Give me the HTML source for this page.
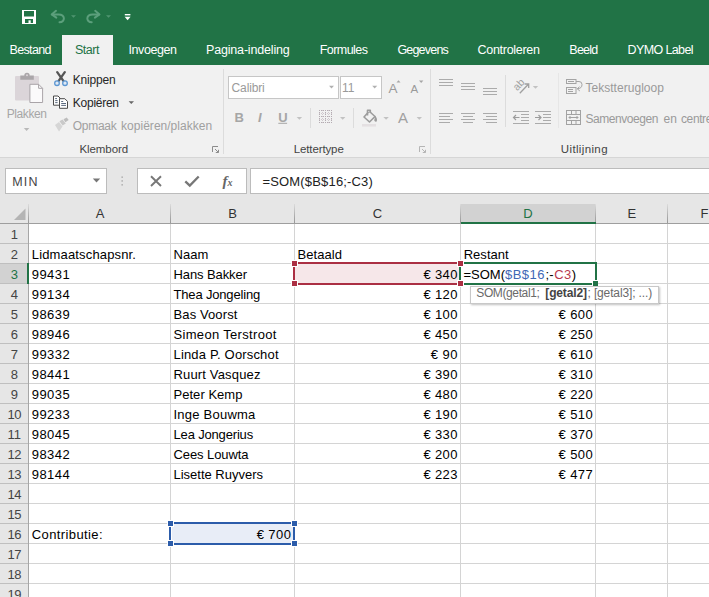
<!DOCTYPE html>
<html><head><meta charset="utf-8"><title>Excel</title>
<style>
html,body{margin:0;padding:0;}
body{width:709px;height:597px;overflow:hidden;position:relative;background:#fff;font-family:"Liberation Sans",sans-serif;}
.a{position:absolute;}
.t{position:absolute;white-space:pre;line-height:1;font-family:"Liberation Sans",sans-serif;}
svg{position:absolute;overflow:visible;}
</style></head><body>
<!-- title + tabs -->
<div class="a" style="left:0;top:0;width:709px;height:65px;background:#217346"></div>
<div class="a" style="left:62px;top:35px;width:51px;height:30px;background:#f1f1f1"></div>
<!-- ribbon -->
<div class="a" style="left:0;top:65px;width:709px;height:92px;background:#f1f1f1"></div>
<div class="a" style="left:0;top:157px;width:709px;height:1px;background:#d6d6d6"></div>
<!-- formula bar area + headers -->
<div class="a" style="left:0;top:158px;width:709px;height:65px;background:#e6e6e6"></div>
<!-- ribbon group separators -->
<div class="a" style="left:223px;top:69px;width:1px;height:85px;background:#dcdcdc"></div>
<div class="a" style="left:430px;top:69px;width:1px;height:85px;background:#dcdcdc"></div>
<div class="a" style="left:310px;top:108px;width:1px;height:20px;background:#dcdcdc"></div>
<div class="a" style="left:353px;top:108px;width:1px;height:20px;background:#dcdcdc"></div>
<div class="a" style="left:505px;top:75px;width:1px;height:52px;background:#dcdcdc"></div>
<div class="a" style="left:558px;top:73px;width:1px;height:55px;background:#e6e6e6"></div>
<!-- font boxes -->
<div class="a" style="left:228px;top:76px;width:111px;height:23px;background:#fff;border:1px solid #c6c6c6;box-sizing:border-box"></div>
<div class="a" style="left:340px;top:76px;width:42px;height:23px;background:#fff;border:1px solid #c6c6c6;box-sizing:border-box"></div>
<!-- name box / fx / formula -->
<div class="a" style="left:5px;top:168px;width:102px;height:26px;background:#fff;border:1px solid #bcbcbc;box-sizing:border-box"></div>
<div class="a" style="left:137px;top:168px;width:110px;height:26px;background:#fff;border:1px solid #bcbcbc;box-sizing:border-box"></div>
<div class="a" style="left:250px;top:168px;width:470px;height:26px;background:#fff;border:1px solid #bcbcbc;box-sizing:border-box"></div>
<div class="a" style="left:0px;top:224px;width:28px;height:373px;background:#e6e6e6;"></div>
<div class="a" style="left:0px;top:264px;width:27px;height:19px;background:#d2d2d2;"></div>
<div class="a" style="left:461px;top:204px;width:134px;height:18px;background:#d2d2d2;"></div>
<div class="a" style="left:0px;top:243px;width:28px;height:1px;background:#bfbfbf;"></div>
<div class="a" style="left:0px;top:263px;width:28px;height:1px;background:#bfbfbf;"></div>
<div class="a" style="left:0px;top:283px;width:28px;height:1px;background:#bfbfbf;"></div>
<div class="a" style="left:0px;top:303px;width:28px;height:1px;background:#bfbfbf;"></div>
<div class="a" style="left:0px;top:323px;width:28px;height:1px;background:#bfbfbf;"></div>
<div class="a" style="left:0px;top:343px;width:28px;height:1px;background:#bfbfbf;"></div>
<div class="a" style="left:0px;top:363px;width:28px;height:1px;background:#bfbfbf;"></div>
<div class="a" style="left:0px;top:383px;width:28px;height:1px;background:#bfbfbf;"></div>
<div class="a" style="left:0px;top:403px;width:28px;height:1px;background:#bfbfbf;"></div>
<div class="a" style="left:0px;top:423px;width:28px;height:1px;background:#bfbfbf;"></div>
<div class="a" style="left:0px;top:443px;width:28px;height:1px;background:#bfbfbf;"></div>
<div class="a" style="left:0px;top:463px;width:28px;height:1px;background:#bfbfbf;"></div>
<div class="a" style="left:0px;top:483px;width:28px;height:1px;background:#bfbfbf;"></div>
<div class="a" style="left:0px;top:503px;width:28px;height:1px;background:#bfbfbf;"></div>
<div class="a" style="left:0px;top:523px;width:28px;height:1px;background:#bfbfbf;"></div>
<div class="a" style="left:0px;top:543px;width:28px;height:1px;background:#bfbfbf;"></div>
<div class="a" style="left:0px;top:563px;width:28px;height:1px;background:#bfbfbf;"></div>
<div class="a" style="left:0px;top:583px;width:28px;height:1px;background:#bfbfbf;"></div>
<div class="a" style="left:0px;top:603px;width:28px;height:1px;background:#bfbfbf;"></div>
<div class="a" style="left:29px;top:243px;width:680px;height:1px;background:#d4d4d4;"></div>
<div class="a" style="left:29px;top:263px;width:680px;height:1px;background:#d4d4d4;"></div>
<div class="a" style="left:29px;top:283px;width:680px;height:1px;background:#d4d4d4;"></div>
<div class="a" style="left:29px;top:303px;width:680px;height:1px;background:#d4d4d4;"></div>
<div class="a" style="left:29px;top:323px;width:680px;height:1px;background:#d4d4d4;"></div>
<div class="a" style="left:29px;top:343px;width:680px;height:1px;background:#d4d4d4;"></div>
<div class="a" style="left:29px;top:363px;width:680px;height:1px;background:#d4d4d4;"></div>
<div class="a" style="left:29px;top:383px;width:680px;height:1px;background:#d4d4d4;"></div>
<div class="a" style="left:29px;top:403px;width:680px;height:1px;background:#d4d4d4;"></div>
<div class="a" style="left:29px;top:423px;width:680px;height:1px;background:#d4d4d4;"></div>
<div class="a" style="left:29px;top:443px;width:680px;height:1px;background:#d4d4d4;"></div>
<div class="a" style="left:29px;top:463px;width:680px;height:1px;background:#d4d4d4;"></div>
<div class="a" style="left:29px;top:483px;width:680px;height:1px;background:#d4d4d4;"></div>
<div class="a" style="left:29px;top:503px;width:680px;height:1px;background:#d4d4d4;"></div>
<div class="a" style="left:29px;top:523px;width:680px;height:1px;background:#d4d4d4;"></div>
<div class="a" style="left:29px;top:543px;width:680px;height:1px;background:#d4d4d4;"></div>
<div class="a" style="left:29px;top:563px;width:680px;height:1px;background:#d4d4d4;"></div>
<div class="a" style="left:29px;top:583px;width:680px;height:1px;background:#d4d4d4;"></div>
<div class="a" style="left:29px;top:603px;width:680px;height:1px;background:#d4d4d4;"></div>
<div class="a" style="left:170px;top:224px;width:1px;height:373px;background:#d4d4d4;"></div>
<div class="a" style="left:294px;top:224px;width:1px;height:373px;background:#d4d4d4;"></div>
<div class="a" style="left:460px;top:224px;width:1px;height:373px;background:#d4d4d4;"></div>
<div class="a" style="left:595px;top:224px;width:1px;height:373px;background:#d4d4d4;"></div>
<div class="a" style="left:667px;top:224px;width:1px;height:373px;background:#d4d4d4;"></div>
<div class="a" style="left:28px;top:204px;width:1px;height:19px;background:linear-gradient(to bottom,rgba(160,160,160,0.15),#a8a8a8 70%,#989898);"></div>
<div class="a" style="left:170px;top:204px;width:1px;height:19px;background:linear-gradient(to bottom,rgba(160,160,160,0.15),#a8a8a8 70%,#989898);"></div>
<div class="a" style="left:294px;top:204px;width:1px;height:19px;background:linear-gradient(to bottom,rgba(160,160,160,0.15),#a8a8a8 70%,#989898);"></div>
<div class="a" style="left:460px;top:204px;width:1px;height:19px;background:linear-gradient(to bottom,rgba(160,160,160,0.15),#a8a8a8 70%,#989898);"></div>
<div class="a" style="left:595px;top:204px;width:1px;height:19px;background:linear-gradient(to bottom,rgba(160,160,160,0.15),#a8a8a8 70%,#989898);"></div>
<div class="a" style="left:667px;top:204px;width:1px;height:19px;background:linear-gradient(to bottom,rgba(160,160,160,0.15),#a8a8a8 70%,#989898);"></div>
<div class="a" style="left:0px;top:223px;width:709px;height:1px;background:#9e9e9e;"></div>
<div class="a" style="left:28px;top:224px;width:1px;height:373px;background:#a6a6a6;"></div>
<div class="a" style="left:461px;top:222px;width:135px;height:2px;background:#217346;"></div>
<div class="a" style="left:27px;top:263px;width:2px;height:21px;background:#217346;"></div>
<svg style="left:0;top:200px" width="29" height="24"><path d="M25.5 8.5 L25.5 20 L14 20 Z" fill="#b4b4b4"/></svg>
<div class="a" style="left:295px;top:264px;width:164px;height:19px;background:#f6e7e9;"></div>
<div class="a" style="left:298px;top:262px;width:159px;height:2px;background:#ab2f43;"></div>
<div class="a" style="left:298px;top:283px;width:159px;height:2px;background:#ab2f43;"></div>
<div class="a" style="left:293px;top:267px;width:2px;height:13px;background:#ab2f43;"></div>
<div class="a" style="left:291px;top:260px;width:7px;height:7px;background:#fff;"></div>
<div class="a" style="left:291px;top:280px;width:7px;height:7px;background:#fff;"></div>
<div class="a" style="left:457px;top:260px;width:7px;height:7px;background:#fff;"></div>
<div class="a" style="left:457px;top:280px;width:7px;height:7px;background:#fff;"></div>
<div class="a" style="left:461px;top:264px;width:134px;height:19px;background:#fff;"></div>
<div class="a" style="left:464px;top:262px;width:133px;height:2px;background:#217346;"></div>
<div class="a" style="left:464px;top:283px;width:128px;height:2px;background:#217346;"></div>
<div class="a" style="left:459px;top:267px;width:2px;height:13px;background:#217346;"></div>
<div class="a" style="left:595px;top:262px;width:2px;height:18px;background:#217346;"></div>
<div class="a" style="left:292px;top:261px;width:5px;height:5px;background:#ab2f43;"></div>
<div class="a" style="left:292px;top:281px;width:5px;height:5px;background:#ab2f43;"></div>
<div class="a" style="left:458px;top:261px;width:5px;height:5px;background:#ab2f43;"></div>
<div class="a" style="left:458px;top:281px;width:5px;height:5px;background:#ab2f43;"></div>
<div class="a" style="left:592px;top:280px;width:6px;height:6px;background:#fff;"></div>
<div class="a" style="left:593px;top:281px;width:5px;height:5px;background:#217346;"></div>
<div class="a" style="left:172px;top:524px;width:121px;height:19px;background:#e8edf7;"></div>
<div class="a" style="left:174px;top:522px;width:117px;height:2px;background:#2c5caa;"></div>
<div class="a" style="left:174px;top:543px;width:117px;height:2px;background:#2c5caa;"></div>
<div class="a" style="left:169px;top:527px;width:2px;height:13px;background:#2c5caa;"></div>
<div class="a" style="left:293px;top:527px;width:2px;height:13px;background:#2c5caa;"></div>
<div class="a" style="left:167px;top:520px;width:7px;height:7px;background:#fff;"></div>
<div class="a" style="left:168px;top:521px;width:5px;height:5px;background:#2c5caa;"></div>
<div class="a" style="left:291px;top:520px;width:7px;height:7px;background:#fff;"></div>
<div class="a" style="left:292px;top:521px;width:5px;height:5px;background:#2c5caa;"></div>
<div class="a" style="left:167px;top:540px;width:7px;height:7px;background:#fff;"></div>
<div class="a" style="left:168px;top:541px;width:5px;height:5px;background:#2c5caa;"></div>
<div class="a" style="left:291px;top:540px;width:7px;height:7px;background:#fff;"></div>
<div class="a" style="left:292px;top:541px;width:5px;height:5px;background:#2c5caa;"></div>
<div class="a" style="left:470px;top:286px;width:189px;height:18px;background:#fff;border:1px solid #c8c8c8;box-sizing:border-box;box-shadow:1px 1px 2px rgba(0,0,0,0.25);"></div>
<svg style="left:0;top:0" width="709" height="597" viewBox="0 0 709 597">
<!-- QAT: save -->
<g>
<rect x="22" y="10" width="14" height="14" fill="#fff"/>
<rect x="24" y="11" width="10" height="5.5" fill="#217346"/>
<rect x="25" y="19" width="8" height="4" fill="#217346"/>
<rect x="28.5" y="20.3" width="2.2" height="2.7" fill="#fff"/>
</g>
<!-- undo -->
<g fill="none" stroke="#5c9f7c" stroke-width="2" stroke-linecap="round" stroke-linejoin="round">
<path d="M56 10.8 L51.7 14.4 L56.3 17.6"/>
<path d="M52.2 14.4 H58.5 C65.5 14.4 65.5 22 59.5 22.3"/>
<path d="M95.2 10.8 L99.5 14.4 L94.9 17.6"/>
<path d="M99 14.4 H92.7 C85.7 14.4 85.7 22 91.7 22.3"/>
</g>
<path d="M71 15.2 h5 l-2.5 2.6 z" fill="#4f9470"/>
<path d="M106 15.2 h5 l-2.5 2.6 z" fill="#4f9470"/>
<!-- customize -->
<rect x="124.8" y="14" width="5.6" height="1.4" fill="#fff"/>
<path d="M124.6 16.8 h6 l-3 3.4 z" fill="#fff"/>

<!-- Paste icon (disabled) -->
<g>
<rect x="15" y="76" width="24" height="24.5" rx="1" fill="#dbd5d9"/>
<path d="M20.3 79.7 V75.5 H24.3 A2.7 2.7 0 0 1 29.7 75.5 H33.8 V79.7 Z" fill="#aaa6a9"/>
<circle cx="27" cy="75.3" r="1" fill="#dbd5d9"/>
<path d="M29.9 84.3 H38.6 L42.6 88.3 V102.5 H29.9 Z" fill="#fbfafb" stroke="#a9a4a8" stroke-width="1"/>
<path d="M38.6 84.3 V88.3 H42.6" fill="none" stroke="#a9a4a8" stroke-width="1"/>
</g>
<path d="M23.8 128 h5.6 l-2.8 3 z" fill="#b9b9b9"/>

<!-- Scissors -->
<g fill="none" stroke-linecap="round">
<path d="M57.2 72.2 L63.4 80.8" stroke="#555" stroke-width="2.3"/>
<path d="M64.8 72.2 L58.6 80.8" stroke="#555" stroke-width="2.3"/>
<circle cx="57" cy="83.2" r="2.3" stroke="#5b96d2" stroke-width="1.3" fill="#dfe9f4"/>
<circle cx="65" cy="83.2" r="2.3" stroke="#5b96d2" stroke-width="1.3" fill="#dfe9f4"/>
</g>
<!-- Copy -->
<g fill="#fff" stroke="#4a4a4a" stroke-width="1">
<path d="M53.5 96 H58 L60 98 V105.2 H53.5 Z"/>
<path d="M59.5 98.7 H64.8 L67.5 101.4 V108.3 H59.5 Z"/>
</g>
<g stroke="#4a5a72" stroke-width="0.9">
<path d="M55.2 98.6 H57 M55.2 100.6 H57.6 M55.2 102.6 H57.6"/>
<path d="M61.2 101.5 H63.2 M61.2 103.5 H66 M61.2 105.4 H66"/>
</g>
<!-- Format painter (disabled) -->
<g>
<path d="M63.5 119.2 l3.2 -1.8 l2 2.6 l-3.4 2.2 z" fill="#bdbdbd"/>
<path d="M59.5 121.2 l3 -1.8 l3.3 4.2 l-3.2 2 z" fill="#c9c9c9"/>
<path d="M55 125 l4 -3 l3.5 4.5 l-3.5 5 z" fill="#d6d6d6"/>
</g>
<path d="M128.6 101.3 h5.4 l-2.7 2.8 z" fill="#666"/>
<!-- dialog launchers -->
<g fill="none" stroke="#8c8c8c" stroke-width="1">
<path d="M212.5 152 V146.5 H218"/><path d="M215 149 L218.3 152.3 M218.5 149.8 V152.5 H215.8"/>
<path d="M419.5 152 V146.5 H425" stroke="#b5b5b5"/><path d="M422 149 L425.3 152.3 M425.5 149.8 V152.5 H422.8" stroke="#b5b5b5"/>
</g>

<!-- font box arrows -->
<path d="M329 85.8 h5 l-2.5 2.7 z" fill="#b0b0b0"/>
<path d="M372.2 85.8 h5 l-2.5 2.7 z" fill="#b0b0b0"/>
<!-- grow/shrink markers -->
<path d="M396.5 82.6 h4 l-2 -2.4 z" fill="#a6a6a6"/>
<path d="M419 80.4 h4.4 l-2.2 2.5 z" fill="#a6a6a6"/>
<!-- U underline -->
<rect x="278.3" y="122.8" width="8.8" height="1" fill="#a6a6a6"/>
<path d="M296.7 117 h5.4 l-2.7 2.8 z" fill="#c2c2c2"/>
<!-- borders icon -->
<g stroke="#b4acb2" stroke-width="1" stroke-dasharray="1 1" fill="none">
<path d="M319 110.5 H333 M319 116.5 H333 M319 122.5 H333 M319.5 110 V123 M325.5 110 V123 M331.5 110 V123"/>
</g>
<g stroke="#cfc8cd" stroke-width="1" stroke-dasharray="1 1" fill="none">
<path d="M319 113.5 H333 M319 119.5 H333 M322.5 110 V123 M328.5 110 V123"/>
</g>
<path d="M340 117 h5.4 l-2.7 2.8 z" fill="#c2c2c2"/>
<!-- fill bucket -->
<g fill="none" stroke="#9c9c9c" stroke-width="1.6" stroke-linejoin="round">
<path d="M368.5 112 L364 117 L369.5 122 L375 116.5 L369.5 111.5"/>
<path d="M367.5 115.5 V110.2 H370.3 V113"/>
</g>
<path d="M375.4 115.8 q2.4 3.4 1.2 5.6 q-1.8 0.9 -2.4 -1.2 z" fill="#9c9c9c"/>
<rect x="362" y="124" width="14" height="2.6" fill="#e4e0e2"/>
<path d="M383.4 117 h5.4 l-2.7 2.8 z" fill="#c2c2c2"/>
<path d="M416.6 117 h5.4 l-2.7 2.8 z" fill="#c2c2c2"/>

<!-- alignment icons -->
<g stroke="#ababab" stroke-width="1" fill="none">
<path d="M439 79.5 H453 M439 82.5 H453 M439 85.5 H453"/>
<path d="M461 83.5 H475 M461 86.5 H475 M461 89.5 H475"/>
<path d="M483 88.5 H497 M483 91.5 H497 M483 94.5 H497"/>
<path d="M439 113.5 H453 M439 116.5 H450 M439 119.5 H453 M439 122.5 H450"/>
<path d="M461 113.5 H475 M463 116.5 H473 M461 119.5 H475 M463 122.5 H473"/>
<path d="M483 113.5 H497 M486 116.5 H497 M483 119.5 H497 M486 122.5 H497"/>
<!-- indent icons -->
<path d="M513 111.5 H529 M521 114.5 H529 M521 117.5 H529 M521 120.5 H529 M513 123.5 H529"/>
<path d="M535 111.5 H551 M543 114.5 H551 M543 117.5 H551 M543 120.5 H551 M535 123.5 H551"/>
</g>
<g stroke="#9c9c9c" stroke-width="1.2" fill="none">
<path d="M519.5 117.5 H513.5 M516 115 L513.5 117.5 L516 120"/>
<path d="M535 117.5 H541 M538.5 115 L541 117.5 L538.5 120"/>
</g>
<!-- orientation -->
<g stroke="#a0a0a0" stroke-width="1.3" fill="none">
<path d="M519.8 93.3 L528.4 84.3 M524.6 84 H528.7 V88"/>
</g>
<text x="0" y="0" transform="translate(517.3 91.2) rotate(-47)" font-family="Liberation Sans" font-size="10.5" fill="#a0a0a0">ab</text>
<path d="M532.8 86 h5.4 l-2.7 2.7 z" fill="#c2c2c2"/>

<!-- wrap text icon -->
<g stroke="#a4a4a4" stroke-width="1" fill="none">
<rect x="566.5" y="79.5" width="9.5" height="4"/>
<path d="M568 81.5 H574"/>
<rect x="566.5" y="87.5" width="9.5" height="6"/>
<path d="M568 89.5 H573 M568 91.5 H573"/>
<path d="M576 81.5 H579 Q582 81.5 582 84.5 Q582 88.5 577.5 88.8"/>
<path d="M579.5 86.6 L577.3 88.9 L579.8 90.9"/>
</g>
<!-- merge icon -->
<g stroke="#a2a2a2" stroke-width="1" fill="none">
<rect x="566.5" y="110.5" width="14" height="14"/>
<path d="M566.5 114.5 H580.5 M566.5 120.5 H580.5 M571.5 110.5 V114.5 M576 110.5 V114.5 M571.5 120.5 V124.5 M576 120.5 V124.5"/>
<path d="M569 117.5 H578 M570.5 116 L569 117.5 L570.5 119 M576.5 116 L578 117.5 L576.5 119"/>
</g>

<!-- name box arrow -->
<path d="M92.8 178.6 h7.4 l-3.7 3.8 z" fill="#777"/>
<!-- dots -->
<g fill="#9c9c9c"><rect x="121.5" y="176.5" width="1.3" height="1.3"/><rect x="121.5" y="180.3" width="1.3" height="1.3"/><rect x="121.5" y="184.2" width="1.3" height="1.3"/></g>
<!-- X, check, fx -->
<g stroke="#777" stroke-width="1.9" fill="none" stroke-linecap="butt">
<path d="M151 176.3 L161 186 M161 176.3 L151 186"/>
<path d="M185.3 181.3 L189.8 185.6 L198.7 176.5" stroke-width="2.3"/>
</g>
<text x="222.5" y="185.5" font-family="Liberation Serif" font-style="italic" font-size="15" font-weight="bold" fill="#666">f</text>
<text x="227.5" y="186" font-family="Liberation Serif" font-style="italic" font-size="10" font-weight="bold" fill="#666">x</text>
</svg>

<span class="t" style="left:9.50px;top:44.00px;font-size:12.5px;color:#fff;letter-spacing:-0.654px;">Bestand</span>
<span class="t" style="left:128.60px;top:44.00px;font-size:12.5px;color:#fff;letter-spacing:-0.455px;">Invoegen</span>
<span class="t" style="left:206.00px;top:44.00px;font-size:12.5px;color:#fff;letter-spacing:-0.173px;">Pagina-indeling</span>
<span class="t" style="left:319.70px;top:44.00px;font-size:12.5px;color:#fff;letter-spacing:-0.549px;">Formules</span>
<span class="t" style="left:397.40px;top:44.00px;font-size:12.5px;color:#fff;letter-spacing:-0.798px;">Gegevens</span>
<span class="t" style="left:477.60px;top:44.00px;font-size:12.5px;color:#fff;letter-spacing:-0.303px;">Controleren</span>
<span class="t" style="left:569.30px;top:44.00px;font-size:12.5px;color:#fff;letter-spacing:-0.757px;">Beeld</span>
<span class="t" style="left:627.60px;top:44.00px;font-size:12.5px;color:#fff;letter-spacing:-0.626px;">DYMO Label</span>
<span class="t" style="left:75.00px;top:44.00px;font-size:12.5px;color:#217346;letter-spacing:-0.481px;">Start</span>
<span class="t" style="left:6.80px;top:108.00px;font-size:12px;color:#a6a6a6;letter-spacing:-0.429px;">Plakken</span>
<span class="t" style="left:72.80px;top:74.00px;font-size:12px;color:#262626;letter-spacing:-0.207px;">Knippen</span>
<span class="t" style="left:72.80px;top:97.00px;font-size:12px;color:#262626;letter-spacing:-0.256px;">Kopiëren</span>
<span class="t" style="left:72.80px;top:120.00px;font-size:12px;color:#a0a0a0;letter-spacing:-0.293px;">Opmaak</span>
<span class="t" style="left:121.10px;top:120.00px;font-size:12px;color:#a0a0a0;letter-spacing:0.017px;">kopiëren/plakken</span>
<span class="t" style="left:79.50px;top:144.00px;font-size:11.5px;color:#444;letter-spacing:-0.090px;">Klembord</span>
<span class="t" style="left:231.60px;top:82.00px;font-size:12px;color:#9a9a9a;letter-spacing:-0.145px;">Calibri</span>
<span class="t" style="left:342.00px;top:82.00px;font-size:12px;color:#9a9a9a;">11</span>
<span class="t" style="left:293.70px;top:144.00px;font-size:11.5px;color:#444;letter-spacing:-0.116px;">Lettertype</span>
<span class="t" style="left:585.40px;top:82.00px;font-size:12px;color:#9a9a9a;letter-spacing:0.040px;">Tekstterugloop</span>
<span class="t" style="left:585.40px;top:113.00px;font-size:12px;color:#9a9a9a;letter-spacing:-0.445px;">Samenvoegen</span>
<span class="t" style="left:663.60px;top:113.00px;font-size:12px;color:#9a9a9a;letter-spacing:-0.030px;">en</span>
<span class="t" style="left:681.00px;top:113.00px;font-size:12px;color:#9a9a9a;letter-spacing:-0.393px;">centre</span>
<span class="t" style="left:560.80px;top:144.00px;font-size:11.5px;color:#444;letter-spacing:0.363px;">Uitlijning</span>
<span class="t" style="left:234.50px;top:111.00px;font-size:13px;color:#a6a6a6;letter-spacing:-1.891px;font-weight:700;">B</span>
<span class="t" style="left:258.00px;top:111.00px;font-size:13px;color:#a6a6a6;letter-spacing:0.375px;font-weight:700;font-style:italic;">I</span>
<span class="t" style="left:278.20px;top:111.00px;font-size:13px;color:#a6a6a6;letter-spacing:-0.091px;font-weight:700;">U</span>
<span class="t" style="left:388.50px;top:82.00px;font-size:13.5px;color:#9a9a9a;letter-spacing:0.484px;">A</span>
<span class="t" style="left:410.50px;top:84.00px;font-size:11.5px;color:#9a9a9a;letter-spacing:0.328px;">A</span>
<span class="t" style="left:398.00px;top:110.00px;font-size:15px;color:#a0a0a0;letter-spacing:0.284px;">A</span>
<span class="t" style="left:12.20px;top:176.00px;font-size:12.5px;color:#444;letter-spacing:1.159px;">MIN</span>
<span class="t" style="left:262.50px;top:175.00px;font-size:13px;color:#222;letter-spacing:0.166px;">=SOM($B$16;-C3)</span>
<span class="t" style="left:95.66px;top:207.00px;font-size:13px;color:#333;">A</span>
<span class="t" style="left:228.16px;top:207.00px;font-size:13px;color:#333;">B</span>
<span class="t" style="left:372.80px;top:207.00px;font-size:13px;color:#333;">C</span>
<span class="t" style="left:627.46px;top:207.00px;font-size:13px;color:#333;">E</span>
<span class="t" style="left:700.62px;top:207.00px;font-size:13px;color:#333;">F</span>
<span class="t" style="left:523.30px;top:207.00px;font-size:13px;color:#217346;">D</span>
<span class="t" style="left:10.68px;top:228.00px;font-size:13px;color:#444;">1</span>
<span class="t" style="left:10.68px;top:248.00px;font-size:13px;color:#444;">2</span>
<span class="t" style="left:10.68px;top:268.00px;font-size:13px;color:#217346;">3</span>
<span class="t" style="left:10.68px;top:288.00px;font-size:13px;color:#444;">4</span>
<span class="t" style="left:10.68px;top:308.00px;font-size:13px;color:#444;">5</span>
<span class="t" style="left:10.68px;top:328.00px;font-size:13px;color:#444;">6</span>
<span class="t" style="left:10.68px;top:348.00px;font-size:13px;color:#444;">7</span>
<span class="t" style="left:10.68px;top:368.00px;font-size:13px;color:#444;">8</span>
<span class="t" style="left:10.68px;top:388.00px;font-size:13px;color:#444;">9</span>
<span class="t" style="left:7.50px;top:408.00px;font-size:13px;color:#444;letter-spacing:-0.434px;">10</span>
<span class="t" style="left:7.50px;top:428.00px;font-size:13px;color:#444;letter-spacing:0.050px;">11</span>
<span class="t" style="left:7.50px;top:448.00px;font-size:13px;color:#444;letter-spacing:-0.434px;">12</span>
<span class="t" style="left:7.50px;top:468.00px;font-size:13px;color:#444;letter-spacing:-0.434px;">13</span>
<span class="t" style="left:7.50px;top:488.00px;font-size:13px;color:#444;letter-spacing:-0.434px;">14</span>
<span class="t" style="left:7.50px;top:508.00px;font-size:13px;color:#444;letter-spacing:-0.434px;">15</span>
<span class="t" style="left:7.50px;top:528.00px;font-size:13px;color:#444;letter-spacing:-0.434px;">16</span>
<span class="t" style="left:7.50px;top:548.00px;font-size:13px;color:#444;letter-spacing:-0.434px;">17</span>
<span class="t" style="left:7.50px;top:568.00px;font-size:13px;color:#444;letter-spacing:-0.434px;">18</span>
<span class="t" style="left:7.50px;top:588.00px;font-size:13px;color:#444;letter-spacing:-0.434px;">19</span>
<span class="t" style="left:31.80px;top:248.00px;font-size:13px;color:#000;letter-spacing:0.150px;">Lidmaatschapsnr.</span>
<span class="t" style="left:31.80px;top:268.00px;font-size:13px;color:#000;letter-spacing:0.429px;">99431</span>
<span class="t" style="left:31.80px;top:288.00px;font-size:13px;color:#000;letter-spacing:0.429px;">99134</span>
<span class="t" style="left:31.80px;top:308.00px;font-size:13px;color:#000;letter-spacing:0.429px;">98639</span>
<span class="t" style="left:31.80px;top:328.00px;font-size:13px;color:#000;letter-spacing:0.429px;">98946</span>
<span class="t" style="left:31.80px;top:348.00px;font-size:13px;color:#000;letter-spacing:0.429px;">99332</span>
<span class="t" style="left:31.80px;top:368.00px;font-size:13px;color:#000;letter-spacing:0.429px;">98441</span>
<span class="t" style="left:31.80px;top:388.00px;font-size:13px;color:#000;letter-spacing:0.429px;">99035</span>
<span class="t" style="left:31.80px;top:408.00px;font-size:13px;color:#000;letter-spacing:0.429px;">99233</span>
<span class="t" style="left:31.80px;top:428.00px;font-size:13px;color:#000;letter-spacing:0.429px;">98045</span>
<span class="t" style="left:31.80px;top:448.00px;font-size:13px;color:#000;letter-spacing:0.429px;">98342</span>
<span class="t" style="left:31.80px;top:468.00px;font-size:13px;color:#000;letter-spacing:0.429px;">98144</span>
<span class="t" style="left:31.80px;top:528.00px;font-size:13px;color:#000;letter-spacing:0.385px;">Contributie:</span>
<span class="t" style="left:173.50px;top:248.00px;font-size:13px;color:#000;letter-spacing:0.028px;">Naam</span>
<span class="t" style="left:173.50px;top:268.00px;font-size:13px;color:#000;letter-spacing:-0.093px;">Hans Bakker</span>
<span class="t" style="left:173.50px;top:288.00px;font-size:13px;color:#000;letter-spacing:-0.172px;">Thea Jongeling</span>
<span class="t" style="left:173.50px;top:308.00px;font-size:13px;color:#000;letter-spacing:0.113px;">Bas Voorst</span>
<span class="t" style="left:173.50px;top:328.00px;font-size:13px;color:#000;letter-spacing:0.323px;">Simeon Terstroot</span>
<span class="t" style="left:173.50px;top:348.00px;font-size:13px;color:#000;letter-spacing:0.165px;">Linda P. Oorschot</span>
<span class="t" style="left:173.50px;top:368.00px;font-size:13px;color:#000;letter-spacing:0.159px;">Ruurt Vasquez</span>
<span class="t" style="left:173.50px;top:388.00px;font-size:13px;color:#000;letter-spacing:0.034px;">Peter Kemp</span>
<span class="t" style="left:173.50px;top:408.00px;font-size:13px;color:#000;letter-spacing:0.236px;">Inge Bouwma</span>
<span class="t" style="left:173.50px;top:428.00px;font-size:13px;color:#000;letter-spacing:-0.167px;">Lea Jongerius</span>
<span class="t" style="left:173.50px;top:448.00px;font-size:13px;color:#000;letter-spacing:-0.081px;">Cees Louwta</span>
<span class="t" style="left:173.50px;top:468.00px;font-size:13px;color:#000;letter-spacing:-0.006px;">Lisette Ruyvers</span>
<span class="t" style="left:297.50px;top:248.00px;font-size:13px;color:#000;letter-spacing:0.058px;">Betaald</span>
<span class="t" style="left:463.70px;top:248.00px;font-size:13px;color:#000;letter-spacing:0.027px;">Restant</span>
<span class="t" style="left:423.50px;top:268.00px;font-size:13px;color:#000;letter-spacing:0.351px;">€ 340</span>
<span class="t" style="left:423.50px;top:288.00px;font-size:13px;color:#000;letter-spacing:0.351px;">€ 120</span>
<span class="t" style="left:423.50px;top:308.00px;font-size:13px;color:#000;letter-spacing:0.351px;">€ 100</span>
<span class="t" style="left:423.50px;top:328.00px;font-size:13px;color:#000;letter-spacing:0.351px;">€ 450</span>
<span class="t" style="left:430.80px;top:348.00px;font-size:13px;color:#000;letter-spacing:0.422px;">€ 90</span>
<span class="t" style="left:423.50px;top:368.00px;font-size:13px;color:#000;letter-spacing:0.351px;">€ 390</span>
<span class="t" style="left:423.50px;top:388.00px;font-size:13px;color:#000;letter-spacing:0.351px;">€ 480</span>
<span class="t" style="left:423.50px;top:408.00px;font-size:13px;color:#000;letter-spacing:0.351px;">€ 190</span>
<span class="t" style="left:423.50px;top:428.00px;font-size:13px;color:#000;letter-spacing:0.351px;">€ 330</span>
<span class="t" style="left:423.50px;top:448.00px;font-size:13px;color:#000;letter-spacing:0.351px;">€ 200</span>
<span class="t" style="left:423.50px;top:468.00px;font-size:13px;color:#000;letter-spacing:0.351px;">€ 223</span>
<span class="t" style="left:558.50px;top:308.00px;font-size:13px;color:#000;letter-spacing:0.411px;">€ 600</span>
<span class="t" style="left:558.50px;top:328.00px;font-size:13px;color:#000;letter-spacing:0.411px;">€ 250</span>
<span class="t" style="left:558.50px;top:348.00px;font-size:13px;color:#000;letter-spacing:0.411px;">€ 610</span>
<span class="t" style="left:558.50px;top:368.00px;font-size:13px;color:#000;letter-spacing:0.411px;">€ 310</span>
<span class="t" style="left:558.50px;top:388.00px;font-size:13px;color:#000;letter-spacing:0.411px;">€ 220</span>
<span class="t" style="left:558.50px;top:408.00px;font-size:13px;color:#000;letter-spacing:0.411px;">€ 510</span>
<span class="t" style="left:558.50px;top:428.00px;font-size:13px;color:#000;letter-spacing:0.411px;">€ 370</span>
<span class="t" style="left:558.50px;top:448.00px;font-size:13px;color:#000;letter-spacing:0.411px;">€ 500</span>
<span class="t" style="left:558.50px;top:468.00px;font-size:13px;color:#000;letter-spacing:0.411px;">€ 477</span>
<span class="t" style="left:256.70px;top:528.00px;font-size:13px;color:#000;letter-spacing:0.411px;">€ 700</span>
<span class="t" style="left:463.50px;top:268.00px;font-size:13px;color:#000;letter-spacing:-0.009px;">=SOM(</span>
<span class="t" style="left:505.00px;top:268.00px;font-size:13px;color:#3f68b5;letter-spacing:0.481px;">$B$16</span>
<span class="t" style="left:545.60px;top:268.00px;font-size:13px;color:#000;letter-spacing:0.023px;">;-</span>
<span class="t" style="left:554.20px;top:268.00px;font-size:13px;color:#b8394e;letter-spacing:0.338px;">C3</span>
<span class="t" style="left:571.70px;top:268.00px;font-size:13px;color:#000;letter-spacing:-0.744px;">)</span>
<span class="t" style="left:476.30px;top:287.00px;font-size:12px;color:#6a6a6a;letter-spacing:-0.387px;">SOM(getal1;</span>
<span class="t" style="left:545.30px;top:287.00px;font-size:12px;color:#444;letter-spacing:-0.148px;font-weight:700;">[getal2]</span>
<span class="t" style="left:587.50px;top:287.00px;font-size:12px;color:#6a6a6a;letter-spacing:-0.844px;">;</span>
<span class="t" style="left:593.90px;top:287.00px;font-size:12px;color:#6a6a6a;letter-spacing:-0.138px;">[getal3]; ...)</span>
</body></html>
